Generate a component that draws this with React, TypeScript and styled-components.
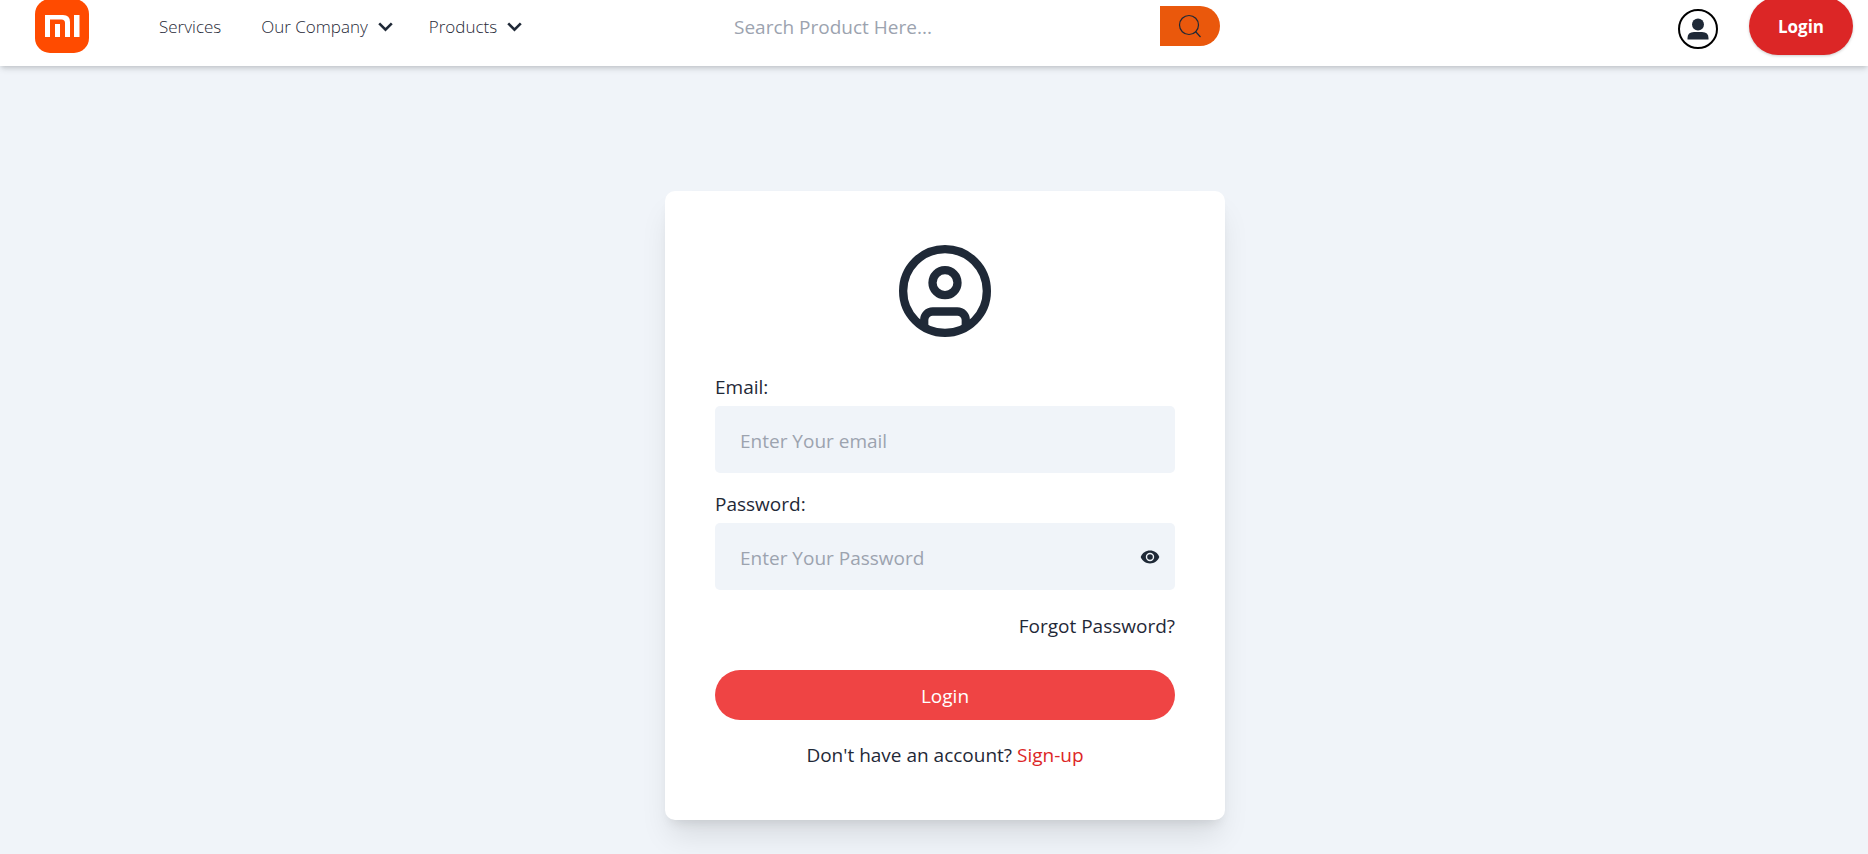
import React from "react";
import styled, { createGlobalStyle } from "styled-components";

const Global = createGlobalStyle`
  *, *::before, *::after { box-sizing: border-box; }
  body { margin: 0; background: #f0f4f9; color: #1f2937; }
  body, input, button { font-family: "Open Sans", "Segoe UI", sans-serif; }
  a { color: inherit; text-decoration: none; }
  svg { display: block; }
`;

const Page = styled.div`
  min-height: 100vh;
  display: flex;
  flex-direction: column;
  background: #f0f4f9;
`;

const Header = styled.header`
  display: flex;
  align-items: center;
  height: 66px;
  padding: 0 15px 14px 35px;
  background: #fff;
  box-shadow: 0 4px 6px -1px rgba(0, 0, 0, 0.12), 0 2px 4px -1px rgba(0, 0, 0, 0.1);
`;

const Side = styled.div<{ $end?: boolean }>`
  flex: 1 1 0;
  display: flex;
  align-items: center;
  justify-content: ${(p) => (p.$end ? "flex-end" : "flex-start")};
  gap: ${(p) => (p.$end ? "31px" : "70px")};
`;

const Nav = styled.nav`
  display: flex;
  align-items: center;
  gap: 40px;
`;

const NavLink = styled.a`
  display: flex;
  align-items: center;
  gap: 10px;
  padding-top: 2px;
  font-size: 17px;
  line-height: 24px;
  font-weight: 300;
  color: #1f2937;
  white-space: nowrap;
`;

const ChevronIcon = styled.svg`
  margin-right: -4px;
`;

const Search = styled.form`
  display: flex;
  width: 500px;
  height: 40px;
  margin-left: 52px;
`;

const SearchInput = styled.input`
  flex: 1;
  min-width: 0;
  padding: 2px 14px 0;
  border: 0;
  outline: 0;
  background: transparent;
  font-size: 19px;
  color: #1f2937;
  &::placeholder { color: #9ca3af; opacity: 1; }
`;

const SearchButton = styled.button`
  width: 60px;
  display: grid;
  place-items: center;
  border: 0;
  padding: 0;
  border-radius: 0 20px 20px 0;
  background: #ea580c;
  color: #1f2937;
`;

const Account = styled.button`
  width: 40px;
  height: 40px;
  margin-top: 6px;
  display: grid;
  place-items: center;
  padding: 0;
  border: 2px solid #000;
  border-radius: 50%;
  background: #fff;
  color: #1f2937;
`;

const HeaderLogin = styled.a`
  display: grid;
  place-items: center;
  width: 104px;
  height: 58px;
  border-radius: 29px;
  background: #dc2626;
  color: #fff;
  font-size: 17px;
  font-weight: 700;
  box-shadow: 0 1px 3px rgba(0, 0, 0, 0.2);
`;

const Main = styled.main`
  flex: 1;
  display: flex;
  justify-content: center;
  align-items: flex-start;
  padding: 125px 0 34px 22px;
`;

const Card = styled.form`
  display: flex;
  flex-direction: column;
  width: 560px;
  padding: 54px 50px 50px;
  border-radius: 10px;
  background: #fff;
  box-shadow: 0 20px 30px -5px rgba(0, 0, 0, 0.1), 0 8px 12px -6px rgba(0, 0, 0, 0.1);
  font-size: 19px;
  line-height: 30px;
`;

const Avatar = styled.div`
  align-self: center;
  margin-bottom: 35px;
`;

const Field = styled.div`
  display: flex;
  flex-direction: column;
  gap: 4px;
  & + & { margin-top: 16px; }
`;

const InputBox = styled.div`
  display: flex;
  align-items: center;
  height: 67px;
  padding-right: 15px;
  border-radius: 5px;
  background: #f0f4f9;
`;

const TextInput = styled.input`
  flex: 1;
  min-width: 0;
  height: 100%;
  padding: 2px 0 0 25px;
  border: 0;
  outline: 0;
  background: transparent;
  font-size: 19px;
  color: #1f2937;
  &::placeholder { color: #9ca3af; opacity: 1; }
`;

const IconButton = styled.button`
  padding: 0;
  border: 0;
  background: transparent;
  color: #1f2937;
`;

const Forgot = styled.a`
  align-self: flex-end;
  margin: 21px 0 29px;
`;

const Submit = styled.button`
  height: 50px;
  padding: 2px 0 0;
  border: 0;
  border-radius: 25px;
  background: #ef4444;
  color: #fff;
  font-size: 19px;
`;

const SignUp = styled.p`
  margin: 20px 0 0;
  text-align: center;
  a { color: #dc2626; }
`;

const Logo = () => (
  <svg width="54" height="54" viewBox="0 0 54 54" role="img" aria-label="Mi">
    <rect width="54" height="54" rx="15" fill="#ff4b00" />
    <path fill="#fff" d="M10 16H28Q35 16 35 23V38H30V24Q30 20.500 26.500 20.500H15V38H10ZM20 25H25V38H20ZM39 16H44.500V38H39Z" />
  </svg>
);

const Chevron = () => (
  <ChevronIcon width="15" height="10" viewBox="0 0 15 10" fill="none" stroke="#1f2937" strokeWidth="2.600" aria-hidden="true">
    <path d="M1.200 1.400L7.500 7.700L13.800 1.400" />
  </ChevronIcon>
);

export default function App() {
  return (
    <>
      <Global />
      <Page>
        <Header>
          <Side>
            <a href="#home"><Logo /></a>
            <Nav>
              <NavLink href="#services">Services</NavLink>
              <NavLink href="#company">Our Company <Chevron /></NavLink>
              <NavLink href="#products">Products <Chevron /></NavLink>
            </Nav>
          </Side>
          <Search role="search">
            <SearchInput type="search" aria-label="Search products" placeholder="Search Product Here..." />
            <SearchButton type="button" aria-label="Search">
              <svg width="24" height="24" viewBox="0 0 24 24" fill="none" stroke="currentColor" strokeWidth="1.200">
                <circle cx="11" cy="11" r="9.500" />
                <path d="M17.500 17.500L22.500 23" />
              </svg>
            </SearchButton>
          </Search>
          <Side $end>
            <Account type="button" aria-label="Account">
              <svg width="22" height="22" viewBox="0 0 22 22" fill="currentColor">
                <circle cx="11" cy="6.500" r="6" />
                <path d="M.500 21.500V20Q.500 14 7 14H15Q21.500 14 21.500 20V21.500Z" />
              </svg>
            </Account>
            <HeaderLogin href="#login">Login</HeaderLogin>
          </Side>
        </Header>
        <Main>
          <Card>
            <Avatar>
              <svg width="92" height="92" viewBox="0 0 92 92" fill="none" stroke="#1f2937" strokeWidth="8.300" aria-hidden="true">
                <circle cx="46" cy="46" r="41.850" />
                <circle cx="46" cy="37.700" r="12.500" />
                <path d="M25.200 82V75a8.500 8.500 0 0 1 8.500-8.500H58.300a8.500 8.500 0 0 1 8.500 8.500V82" />
              </svg>
            </Avatar>
            <Field>
              <label htmlFor="email">Email:</label>
              <InputBox><TextInput id="email" type="email" placeholder="Enter Your email" /></InputBox>
            </Field>
            <Field>
              <label htmlFor="password">Password:</label>
              <InputBox>
                <TextInput id="password" type="password" placeholder="Enter Your Password" />
                <IconButton type="button" aria-label="Show password">
                  <svg width="20" height="14" viewBox="0 0 20 14">
                    <path d="M.700 7C2.300 3 5.800.600 10 .600S17.700 3 19.300 7C17.700 11 14.200 13.400 10 13.400S2.300 11 .700 7Z" fill="#1f2937" />
                    <circle cx="10" cy="7" r="3.500" fill="none" stroke="#f0f4f9" strokeWidth="1.400" />
                  </svg>
                </IconButton>
              </InputBox>
            </Field>
            <Forgot href="#forgot">Forgot Password?</Forgot>
            <Submit type="button">Login</Submit>
            <SignUp>Don't have an account? <a href="#signup">Sign-up</a></SignUp>
          </Card>
        </Main>
      </Page>
    </>
  );
}
